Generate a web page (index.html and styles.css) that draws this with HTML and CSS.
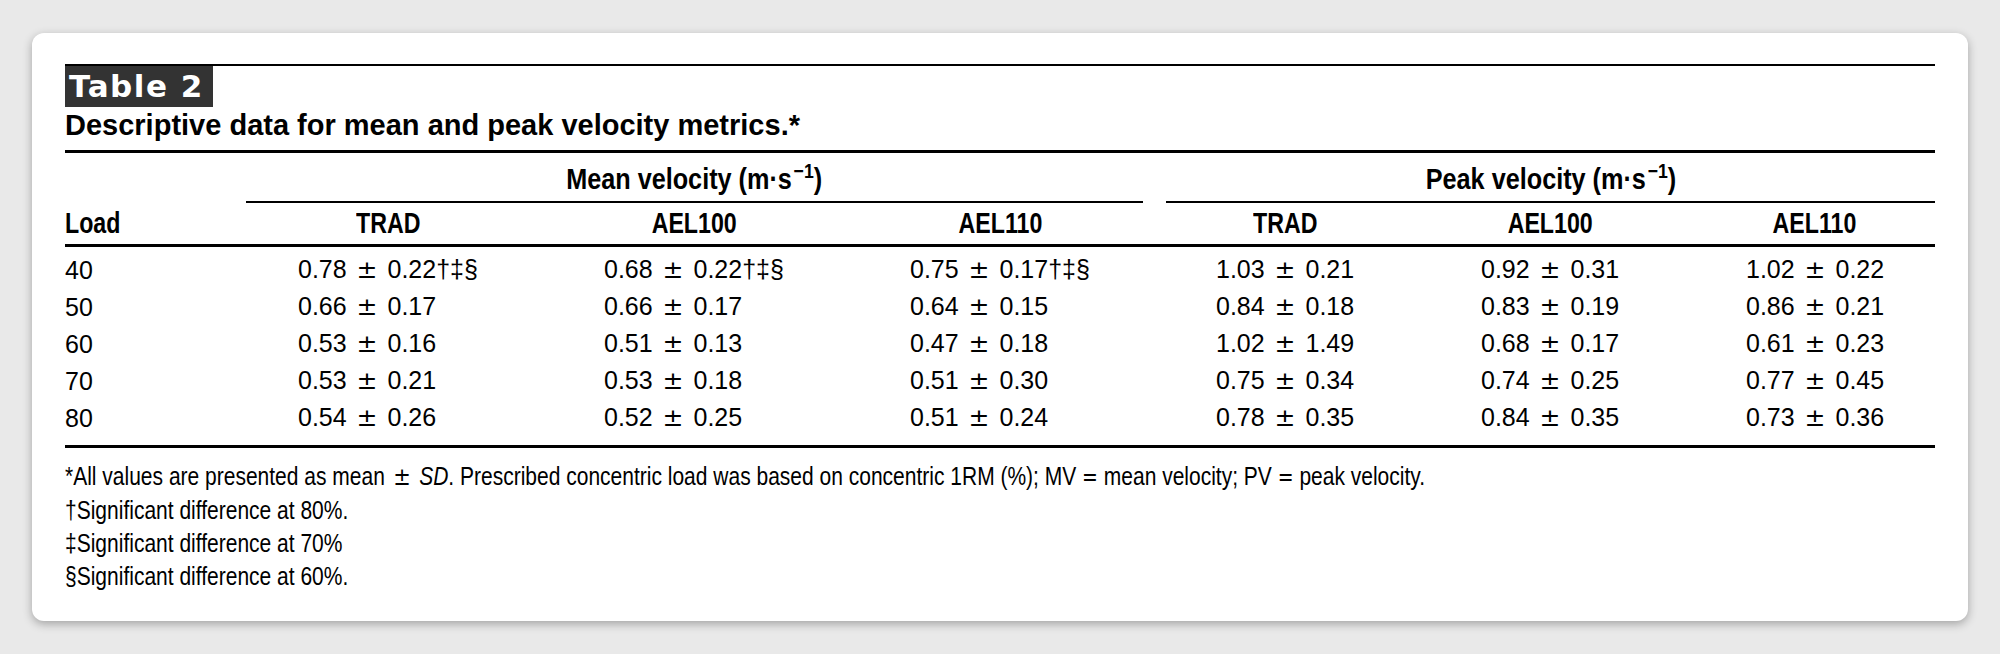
FILE: index.html
```html
<!DOCTYPE html>
<html lang="en">
<head>
<meta charset="utf-8">
<title>Table 2</title>
<link rel="stylesheet" href="styles.css">
</head>
<body>
<div class="card">
  <div class="caption">
    <div class="label">Table 2</div>
    <div class="title">Descriptive data for mean and peak velocity metrics.*</div>
  </div>
  <table class="data">
    <colgroup>
      <col class="c-load">
      <col class="c-mean"><col class="c-mean"><col class="c-mean">
      <col class="c-peak"><col class="c-peak"><col class="c-peak-last">
    </colgroup>
    <thead>
      <tr class="span-row">
        <th></th>
        <th colspan="3" class="mean"><div class="rule"><span class="hx sp">Mean velocity (m·s<sup>−1</sup>)</span></div></th>
        <th colspan="3" class="peak"><div class="rule"><span class="hx sp">Peak velocity (m·s<sup>−1</sup>)</span></div></th>
      </tr>
      <tr class="head-row">
        <th class="load"><span class="hx">Load</span></th>
        <th><span class="hx">TRAD</span></th><th><span class="hx">AEL100</span></th><th><span class="hx">AEL110</span></th>
        <th><span class="hx">TRAD</span></th><th><span class="hx">AEL100</span></th><th class="last"><span class="hx">AEL110</span></th>
      </tr>
    </thead>
    <tbody>
      <tr>
        <td class="load">40</td>
        <td>0.78 <span class="pm">±</span> 0.22†‡§</td>
        <td>0.68 <span class="pm">±</span> 0.22†‡§</td>
        <td>0.75 <span class="pm">±</span> 0.17†‡§</td>
        <td>1.03 <span class="pm">±</span> 0.21</td>
        <td>0.92 <span class="pm">±</span> 0.31</td>
        <td>1.02 <span class="pm">±</span> 0.22</td>
      </tr>
      <tr>
        <td class="load">50</td>
        <td>0.66 <span class="pm">±</span> 0.17</td>
        <td>0.66 <span class="pm">±</span> 0.17</td>
        <td>0.64 <span class="pm">±</span> 0.15</td>
        <td>0.84 <span class="pm">±</span> 0.18</td>
        <td>0.83 <span class="pm">±</span> 0.19</td>
        <td>0.86 <span class="pm">±</span> 0.21</td>
      </tr>
      <tr>
        <td class="load">60</td>
        <td>0.53 <span class="pm">±</span> 0.16</td>
        <td>0.51 <span class="pm">±</span> 0.13</td>
        <td>0.47 <span class="pm">±</span> 0.18</td>
        <td>1.02 <span class="pm">±</span> 1.49</td>
        <td>0.68 <span class="pm">±</span> 0.17</td>
        <td>0.61 <span class="pm">±</span> 0.23</td>
      </tr>
      <tr>
        <td class="load">70</td>
        <td>0.53 <span class="pm">±</span> 0.21</td>
        <td>0.53 <span class="pm">±</span> 0.18</td>
        <td>0.51 <span class="pm">±</span> 0.30</td>
        <td>0.75 <span class="pm">±</span> 0.34</td>
        <td>0.74 <span class="pm">±</span> 0.25</td>
        <td>0.77 <span class="pm">±</span> 0.45</td>
      </tr>
      <tr>
        <td class="load">80</td>
        <td>0.54 <span class="pm">±</span> 0.26</td>
        <td>0.52 <span class="pm">±</span> 0.25</td>
        <td>0.51 <span class="pm">±</span> 0.24</td>
        <td>0.78 <span class="pm">±</span> 0.35</td>
        <td>0.84 <span class="pm">±</span> 0.35</td>
        <td>0.73 <span class="pm">±</span> 0.36</td>
      </tr>
    </tbody>
  </table>
  <div class="notes">
    <p>*All values are presented as mean <span class="pm">±</span> <i>SD</i>. Prescribed concentric load was based on concentric 1RM (%); MV <span class="eq">=</span> mean velocity; PV <span class="eq">=</span> peak velocity.</p>
    <p>†Significant difference at 80%.</p>
    <p>‡Significant difference at 70%</p>
    <p>§Significant difference at 60%.</p>
  </div>
</div>
</body>
</html>
```

FILE: styles.css
```css
html, body {
  margin: 0;
}

body {
  background: #e9e9e9;
  padding: 33px 32px;
  font-family: "Liberation Sans", Arial, sans-serif;
  color: #000;
}

.card {
  background: #fff;
  border-radius: 12px;
  box-shadow: 0 3px 10px rgba(0, 0, 0, 0.3);
  padding: 31px 33px 28px;
}

.caption {
  border-top: 2px solid #000;
}

.label {
  display: block;
  width: fit-content;
  background: #333;
  color: #fff;
  font-family: "DejaVu Sans", sans-serif;
  font-weight: bold;
  font-size: 31px;
  line-height: 41px;
  letter-spacing: 1.5px;
  padding: 0 9px 0 4px;
}

.title {
  font-family: "Liberation Sans", Arial, sans-serif;
  font-weight: bold;
  font-size: 29px;
  line-height: 36px;
  padding-bottom: 7px;
  border-bottom: 3px solid #000;
}

.data {
  width: 100%;
  table-layout: fixed;
  border-collapse: separate;
  border-spacing: 0;
}

.c-load { width: 170px; }
.c-mean { width: 306px; }
.c-peak { width: 265px; }
.c-peak-last { width: 252px; }

.data th {
  font-weight: bold;
  font-size: 29px;
  line-height: 30px;
  padding: 0;
}

.hx {
  display: inline-block;
  transform: scaleX(0.8);
}

.hx.sp {
  transform: scaleX(0.87);
}

.data sup {
  font-size: 0.7em;
  line-height: 0;
  vertical-align: 0.55em;
  padding-left: 2px;
}

.span-row th {
  padding-top: 11px;
  text-align: center;
}

.span-row .rule {
  padding-bottom: 7px;
  border-bottom: 2px solid #000;
}

.span-row .mean .rule {
  margin: 0 10px 0 11px;
}

.span-row .peak .rule {
  margin-left: 13px;
}

.head-row th {
  padding: 5px 0 6px;
  border-bottom: 3px solid #000;
  text-align: center;
}

.head-row th.load {
  text-align: left;
}

.head-row th.load .hx {
  transform-origin: left center;
}

.head-row th.last {
  padding-left: 10px;
}

.data td {
  font-size: 25px;
  line-height: 36px;
  padding: 0 0 0 63px;
  text-align: left;
  white-space: nowrap;
}

.data td.load {
  padding-left: 0;
}

.data tbody tr:first-child td {
  padding-top: 4px;
}

.data tbody tr:last-child td {
  padding-bottom: 9px;
  border-bottom: 3px solid #000;
}

.pm {
  font-family: "DejaVu Sans", sans-serif;
  padding: 0 3px;
}

.eq {
  font-family: "DejaVu Sans", sans-serif;
  font-size: 0.9em;
}

.notes {
  margin-top: 12px;
  font-size: 25px;
  line-height: 33px;
}

.notes p {
  margin: 0;
  white-space: nowrap;
  transform: scaleX(0.84);
  transform-origin: left center;
}
```
